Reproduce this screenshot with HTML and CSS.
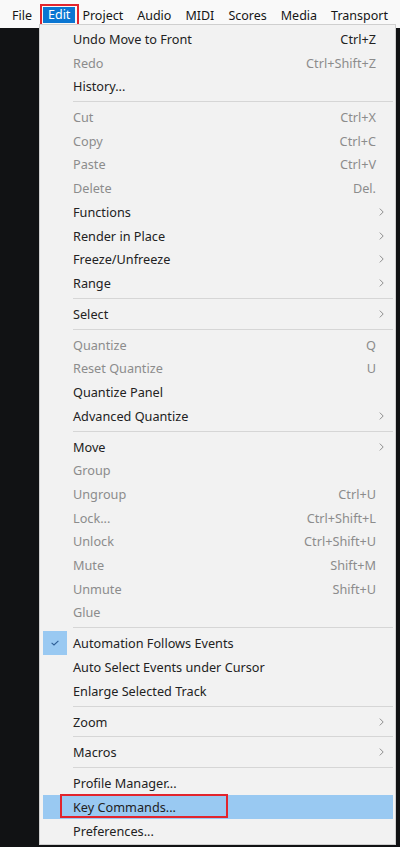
FILE: index.html
```html
<!DOCTYPE html>
<html>
<head>
<meta charset="utf-8">
<link rel="stylesheet" href="styles.css">
</head>
<body>
<div class="app">
  <nav class="menubar">
    <span class="mb-item">File</span>
    <span class="mb-annot"><span class="mb-item mb-active">Edit</span></span>
    <span class="mb-item">Project</span>
    <span class="mb-item">Audio</span>
    <span class="mb-item">MIDI</span>
    <span class="mb-item">Scores</span>
    <span class="mb-item">Media</span>
    <span class="mb-item">Transport</span>
  </nav>
  <div class="workspace"></div>

  <div class="menu">
    <div class="row"><span class="label">Undo Move to Front</span><span class="key">Ctrl+Z</span></div>
    <div class="row dis"><span class="label">Redo</span><span class="key">Ctrl+Shift+Z</span></div>
    <div class="row"><span class="label">History...</span></div>
    <div class="sep"></div>
    <div class="row dis"><span class="label">Cut</span><span class="key">Ctrl+X</span></div>
    <div class="row dis"><span class="label">Copy</span><span class="key">Ctrl+C</span></div>
    <div class="row dis"><span class="label">Paste</span><span class="key">Ctrl+V</span></div>
    <div class="row dis"><span class="label">Delete</span><span class="key">Del.</span></div>
    <div class="row"><span class="label">Functions</span><span class="sub"><svg viewBox="0 0 5 8" width="5" height="8"><path d="M0.8 0.6 L4.2 4 L0.8 7.4" fill="none" stroke="#8e8e8e" stroke-width="1"/></svg></span></div>
    <div class="row"><span class="label">Render in Place</span><span class="sub"><svg viewBox="0 0 5 8" width="5" height="8"><path d="M0.8 0.6 L4.2 4 L0.8 7.4" fill="none" stroke="#8e8e8e" stroke-width="1"/></svg></span></div>
    <div class="row"><span class="label">Freeze/Unfreeze</span><span class="sub"><svg viewBox="0 0 5 8" width="5" height="8"><path d="M0.8 0.6 L4.2 4 L0.8 7.4" fill="none" stroke="#8e8e8e" stroke-width="1"/></svg></span></div>
    <div class="row"><span class="label">Range</span><span class="sub"><svg viewBox="0 0 5 8" width="5" height="8"><path d="M0.8 0.6 L4.2 4 L0.8 7.4" fill="none" stroke="#8e8e8e" stroke-width="1"/></svg></span></div>
    <div class="sep"></div>
    <div class="row"><span class="label">Select</span><span class="sub"><svg viewBox="0 0 5 8" width="5" height="8"><path d="M0.8 0.6 L4.2 4 L0.8 7.4" fill="none" stroke="#8e8e8e" stroke-width="1"/></svg></span></div>
    <div class="sep"></div>
    <div class="row dis"><span class="label">Quantize</span><span class="key">Q</span></div>
    <div class="row dis"><span class="label">Reset Quantize</span><span class="key">U</span></div>
    <div class="row"><span class="label">Quantize Panel</span></div>
    <div class="row"><span class="label">Advanced Quantize</span><span class="sub"><svg viewBox="0 0 5 8" width="5" height="8"><path d="M0.8 0.6 L4.2 4 L0.8 7.4" fill="none" stroke="#8e8e8e" stroke-width="1"/></svg></span></div>
    <div class="sep"></div>
    <div class="row"><span class="label">Move</span><span class="sub"><svg viewBox="0 0 5 8" width="5" height="8"><path d="M0.8 0.6 L4.2 4 L0.8 7.4" fill="none" stroke="#8e8e8e" stroke-width="1"/></svg></span></div>
    <div class="row dis"><span class="label">Group</span></div>
    <div class="row dis"><span class="label">Ungroup</span><span class="key">Ctrl+U</span></div>
    <div class="row dis"><span class="label">Lock...</span><span class="key">Ctrl+Shift+L</span></div>
    <div class="row dis"><span class="label">Unlock</span><span class="key">Ctrl+Shift+U</span></div>
    <div class="row dis"><span class="label">Mute</span><span class="key">Shift+M</span></div>
    <div class="row dis"><span class="label">Unmute</span><span class="key">Shift+U</span></div>
    <div class="row dis"><span class="label">Glue</span></div>
    <div class="sep"></div>
    <div class="row"><span class="check"><svg viewBox="0 0 8 6" width="8" height="6"><path d="M0.6 2.8 L3 5 L7.4 0.8" fill="none" stroke="#2f5f97" stroke-width="1.1"/></svg></span><span class="label">Automation Follows Events</span></div>
    <div class="row"><span class="label">Auto Select Events under Cursor</span></div>
    <div class="row"><span class="label">Enlarge Selected Track</span></div>
    <div class="sep"></div>
    <div class="row"><span class="label">Zoom</span><span class="sub"><svg viewBox="0 0 5 8" width="5" height="8"><path d="M0.8 0.6 L4.2 4 L0.8 7.4" fill="none" stroke="#8e8e8e" stroke-width="1"/></svg></span></div>
    <div class="sep"></div>
    <div class="row"><span class="label">Macros</span><span class="sub"><svg viewBox="0 0 5 8" width="5" height="8"><path d="M0.8 0.6 L4.2 4 L0.8 7.4" fill="none" stroke="#8e8e8e" stroke-width="1"/></svg></span></div>
    <div class="sep"></div>
    <div class="row"><span class="label">Profile Manager...</span></div>
    <div class="row hot"><span class="label">Key Commands...</span><span class="row-annot"></span></div>
    <div class="row"><span class="label">Preferences...</span></div>
  </div>
</div>
</body>
</html>
```

FILE: styles.css
```css
html, body {
  margin: 0;
  padding: 0;
}
body {
  background: #111214;
  font-family: "Noto Sans", "Open Sans", sans-serif;
  font-size: 12.7px;
  color: #222;
}
.app {
  position: relative;
  width: 400px;
  height: 847px;
  overflow: hidden;
  display: flex;
  flex-direction: column;
}
.menubar {
  height: 28px;
  flex: none;
  background: #f9f9f9;
  display: flex;
  align-items: center;
  padding-left: 12px;
  padding-top: 4px;
  box-sizing: border-box;
  gap: 14px;
  font-size: 12.5px;
  color: #161616;
}
.mb-item {
  line-height: 16px;
}
.mb-annot {
  border: 2px solid #e2252d;
  padding: 1px 2px 3px 1px;
  margin: 0 -11px 0 -6px;
  align-self: flex-start;
  height: 16px;
  display: flex;
}
.mb-active {
  background: #0a76d2;
  color: #fff;
  padding: 0 5px;
}
.workspace {
  flex: 1;
  background: #111214;
}
.menu {
  position: absolute;
  left: 39px;
  top: 24px;
  width: 355px;
  background: #f2f2f2;
  border: 1px solid #cfcfcf;
  padding: 2px 0 1px;
  box-sizing: content-box;
}
.row {
  position: relative;
  height: 23.7px;
  margin: 0 2px 0 3px;
  display: flex;
  align-items: center;
  padding: 0 0 0 30px;
}
.row .label {
  flex: 1;
  white-space: nowrap;
}
.row .key {
  padding-right: 17px;
  white-space: nowrap;
}
.row .sub {
  width: 17px;
  display: flex;
  align-items: center;
  padding-left: 3px;
  box-sizing: border-box;
}
.row.dis {
  color: #8c8c8c;
}
.row.hot {
  background: #99c9f2;
}
.check {
  position: absolute;
  left: 0;
  top: 0;
  width: 24px;
  height: 23.7px;
  background: #99c9f2;
  display: flex;
  align-items: center;
  justify-content: center;
}
.row-annot {
  position: absolute;
  left: 17px;
  top: -1px;
  width: 168px;
  height: 24px;
  border: 2px solid #e2252d;
  box-sizing: border-box;
}
.sep {
  height: 7.2px;
  margin-left: 33px;
  margin-right: 2px;
  display: flex;
  align-items: center;
}
.sep::before {
  content: "";
  display: block;
  width: 100%;
  height: 1px;
  background: #d6d6d6;
}
```
